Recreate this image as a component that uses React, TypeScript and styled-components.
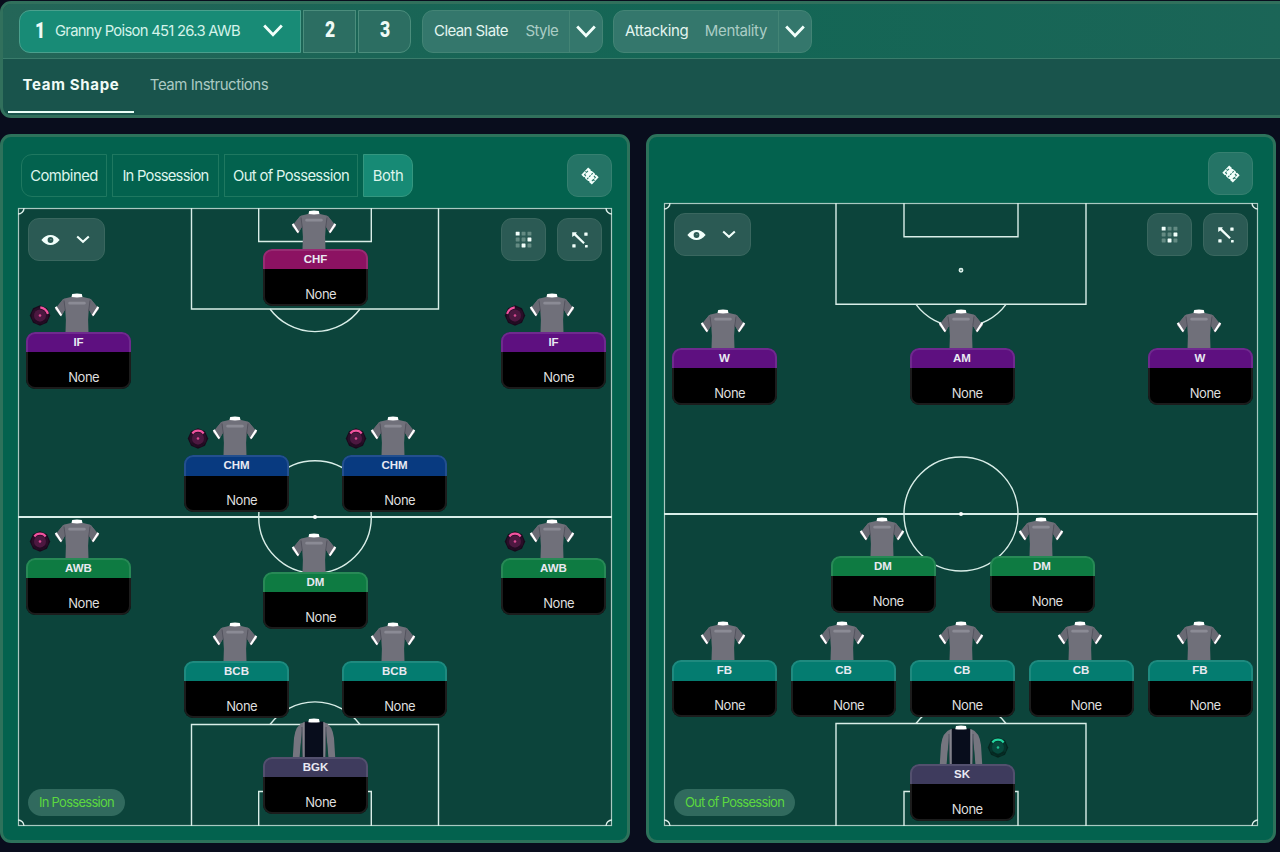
import React from "react";
import styled, { createGlobalStyle } from "styled-components";

const GlobalStyle = createGlobalStyle`
  *, *::before, *::after { box-sizing: border-box; }
  html, body { margin: 0; padding: 0; background: #090d1d; }
  body { font-family: Inter, "Liberation Sans", sans-serif; color: #e6f5f0; overflow: hidden; }
`;

const Screen = styled.div`
  width: 1280px;
  height: 852px;
  padding-top: 1px;
  display: flex;
  flex-direction: column;
  gap: 16px;
  overflow: hidden;
`;

const Header = styled.header`
  width: 1290px;
  height: 117px;
  flex: none;
  border: 3px solid #31705c;
  border-radius: 11px;
  overflow: hidden;
  background: #19544c;
`;

const TopBar = styled.div`
  display: flex;
  align-items: flex-start;
  height: 55px;
  padding: 6px 0 0 16px;
  border-bottom: 1px solid #3a7c6b;
  background: linear-gradient(90deg, #246658 0, #1a6556 380px, #136655 700px, #1b6557 1280px);
`;

const SlotGroup = styled.div`
  display: flex;
  gap: 2px;
  margin-right: 11px;
`;

const Slot = styled.button<{ $w: number; $active?: boolean; $end?: boolean }>`
  width: ${(p) => p.$w}px;
  height: 43px;
  display: flex;
  align-items: center;
  justify-content: ${(p) => (p.$active ? "flex-start" : "center")};
  padding: ${(p) => (p.$active ? "0 0 2px 10px" : "0 0 4px")};
  border: 1px solid ${(p) => (p.$active ? "#4aa08d" : "#4b8d7c")};
  border-radius: ${(p) => (p.$active ? "11px 0 0 11px" : p.$end ? "0 11px 11px 0" : "0")};
  background: ${(p) => (p.$active ? "#188b76" : "#2c6e62")};
  color: #effaf6;
`;

const SlotNumber = styled.span`
  width: 20px;
  margin-right: 0;
  text-align: center;
  font: 900 22px/24px Roboto, sans-serif;
  transform: scaleX(0.8);
`;

const SlotName = styled.span`
  width: 208px;
  margin-left: 5px;
  text-align: left;
  white-space: nowrap;
  font: 400 14.8px/20px Inter, sans-serif;
  letter-spacing: -0.71px;
  color: #d5f3ea;
`;

const SelectBox = styled.div<{ $w: number }>`
  width: ${(p) => p.$w}px;
  height: 43px;
  margin-right: 10px;
  display: flex;
  border: 1px solid #438475;
  border-radius: 11px;
  background: #34776c;
`;

const SelectText = styled.div`
  flex: 1;
  display: flex;
  align-items: center;
  justify-content: space-between;
  padding: 0 11px 1px 11px;
  border-right: 1px solid #438475;
  font: 400 15px/20px Inter, sans-serif;
  white-space: nowrap;
`;

const Value = styled.span<{ $ls: number }>`
  color: #e3f5f0;
  letter-spacing: ${(p) => p.$ls}px;
`;

const Kind = styled.span<{ $ls: number }>`
  color: #abcdc5;
  letter-spacing: ${(p) => p.$ls}px;
`;

const SelectArrow = styled.div`
  width: 32px;
  display: flex;
  align-items: center;
  justify-content: center;
`;

const Tabs = styled.nav`
  display: flex;
  height: 54px;
  padding-left: 5px;
`;

const Tab = styled.div<{ $active?: boolean; $w: number }>`
  width: ${(p) => p.$w}px;
  height: 54px;
  display: flex;
  justify-content: center;
  padding-top: 16px;
  border-bottom: 2px solid ${(p) => (p.$active ? "#eafff8" : "transparent")};
  color: ${(p) => (p.$active ? "#f0fbf7" : "#abcac3")};
  font: ${(p) => (p.$active ? 700 : 400)} 15px/20px Inter, sans-serif;
  letter-spacing: ${(p) => (p.$active ? "0.68px" : "-0.47px")};
  white-space: nowrap;
`;

const Panels = styled.main`
  display: flex;
  gap: 16px;
`;

const Panel = styled.section<{ $top: number }>`
  width: 630px;
  height: 709px;
  flex: none;
  border: 3px solid #2d725b;
  border-radius: 11px;
  background: #03624e;
  padding: ${(p) => p.$top}px 15px 0;
`;

const PanelBar = styled.div<{ $h: number; $right: number }>`
  display: flex;
  align-items: flex-start;
  justify-content: space-between;
  height: ${(p) => p.$h}px;
  padding: 0 ${(p) => p.$right}px 0 3px;
`;

const ViewGroup = styled.div`
  display: flex;
  gap: 5px;
`;

const ViewButton = styled.button<{ $w: number; $pos?: "start" | "end"; $active?: boolean; $ls: number }>`
  width: ${(p) => p.$w}px;
  height: 43px;
  padding: 0;
  border: 1px solid ${(p) => (p.$active ? "#34977f" : "#1f7860")};
  border-radius: ${(p) => (p.$pos === "start" ? "11px 0 0 11px" : p.$pos === "end" ? "0 11px 11px 0" : "0")};
  background: ${(p) => (p.$active ? "#178a75" : "transparent")};
  color: #ddf5ec;
  font: 400 14.8px/20px Inter, sans-serif;
  letter-spacing: ${(p) => p.$ls}px;
  white-space: nowrap;
`;

const IconButton = styled.button<{ $dark?: boolean; $w?: number }>`
  width: ${(p) => p.$w ?? 45}px;
  height: 43px;
  padding: 0 ${(p) => (p.$w ? 3 : 0)}px 0 0;
  display: flex;
  align-items: center;
  justify-content: center;
  gap: 16px;
  border: 1px solid ${(p) => (p.$dark ? "#3a675f" : "#368070")};
  border-radius: 11px;
  background: ${(p) => (p.$dark ? "#2b5a54" : "#257466")};
`;

const PitchArea = styled.div<{ $h: number }>`
  position: relative;
  width: 594px;
  height: ${(p) => p.$h}px;
  background: #0c443b;
`;

const Markings = styled.svg`
  display: block;
  overflow: visible;
`;

const PitchTools = styled.div`
  position: absolute;
  z-index: 2;
  top: 10px;
  left: 10px;
  right: 10px;
  display: flex;
  gap: 11px;
`;

const Spacer = styled.div`
  flex: 1;
`;

const Phase = styled.div<{ $w: number }>`
  position: absolute;
  left: 10px;
  bottom: 10px;
  width: ${(p) => p.$w}px;
  height: 27px;
  border-radius: 14px;
  background: #316a5e;
  color: #5cd83f;
  text-align: center;
  font: 400 13px/27px Inter, sans-serif;
  letter-spacing: -0.72px;
  white-space: nowrap;
`;

const PlayerSpot = styled.div.attrs<{ $x: number; $y: number }>((p) => ({
  style: { left: p.$x - 52.5, top: p.$y - 39 },
}))<{ $x: number; $y: number }>`
  position: absolute;
  width: 105px;
  display: flex;
  flex-direction: column;
  align-items: center;
`;

const ShirtSvg = styled.svg`
  display: block;
  margin-right: 3px;
`;

const DutySvg = styled.svg<{ $right?: boolean }>`
  position: absolute;
  top: 11px;
  left: ${(p) => (p.$right ? 77 : 3)}px;
`;

const Card = styled.div<{ $color: string }>`
  position: relative;
  width: 105px;
  height: 57px;
  border-radius: 9px;
  overflow: hidden;
  background: linear-gradient(${(p) => p.$color} 0 20.5px, #000 20.5px);
  &::after {
    content: "";
    position: absolute;
    inset: 0;
    border: 2px solid rgba(255, 255, 255, 0.11);
    border-radius: 9px;
  }
`;

const Role = styled.div`
  height: 21px;
  text-align: center;
  color: #e9e9f2;
  font: 700 11.5px/20px "Liberation Sans", sans-serif;
`;

const PlayerName = styled.div`
  margin-top: 14px;
  padding-left: 10.5px;
  text-align: center;
  color: #dedede;
  font: 400 13px/20px Inter, sans-serif;
  letter-spacing: -0.5px;
`;

function Chevron({ w, h, s }: { w: number; h: number; s: number }) {
  return (
    <svg width={w} height={h} viewBox={`0 0 ${w} ${h}`} fill="none" stroke="#f2fffb" strokeWidth={s}>
      <path d={`M1.2 1.5L${w / 2} ${h - 2.2}L${w - 1.2} 1.5`} />
    </svg>
  );
}

function TacticIcon() {
  return (
    <svg width="18" height="18" viewBox="0 0 18 18">
      <g transform="rotate(43 9 9)">
        <path d="M1.8 4h3.500l.8.8.8-.8h4.200l.8.8.8-.8h3.500v10h-3.500l-.8-.8-.8.8H6.900l-.8-.8-.8.8H1.800z" fill="#f2fffb" />
        <path d="M4 6.600v2.100H2.400M13.900 11.500V9.300h1.700M6.100 11.800H4.200v-1.500M11.800 6.300h2v1.400M9 5v2M9 8.200v2M9 11.300v1.900" fill="none" stroke="#257466" strokeWidth="1" />
      </g>
    </svg>
  );
}

function EyeIcon() {
  return (
    <svg width="19" height="12" viewBox="0 0 19 12">
      <path d="M.4 6C3.200 2.500 6 1.100 9.500 1.100S15.800 2.500 18.600 6C15.800 9.500 13 10.900 9.500 10.900S3.200 9.500.4 6z" fill="#f2fffb" />
      <circle cx="9.500" cy="6" r="2.900" fill="#2b5a54" />
      <circle cx="9.900" cy="5.600" r=".7" fill="#7f9f99" />
    </svg>
  );
}

function GridIcon() {
  const bright = [0, 5, 7];
  return (
    <svg width="17" height="17" viewBox="0 0 17 17">
      {Array.from({ length: 9 }, (_, i) => (
        <rect
          key={i}
          x={0.7 + (i % 3) * 5.9}
          y={0.7 + Math.floor(i / 3) * 5.9}
          width="3.900"
          height="3.900"
          rx=".4"
          fill={bright.includes(i) ? "#f2fffb" : "#648b83"}
        />
      ))}
    </svg>
  );
}

function PathIcon() {
  return (
    <svg width="18" height="18" viewBox="0 0 18 18" fill="#f2fffb">
      <path d="M1.200 1.300h4.600L5 2.700 13.800 11.600 12.300 13.100 3.300 4.400 1.200 6z" />
      <rect x="13.300" y="1.400" width="3.300" height="3.300" rx=".5" />
      <rect x="1.300" y="13.300" width="3.300" height="3.300" rx=".5" />
      <rect x="14" y="13.900" width="2.700" height="2.700" rx=".5" />
    </svg>
  );
}

function Shirt({ keeper }: { keeper?: boolean }) {
  if (keeper) {
    return (
      <ShirtSvg width="46" height="39" viewBox="0 0 46 39">
        <path d="M13 4Q4.500 7 3 20L1.800 39H8.600L10.500 19 12 39H34L35.500 19 37.400 39H44.200L43 20Q41.500 7 33 4z" fill="#75757f" />
        <path d="M10.500 12L9.200 39H12zM35.500 12L36.800 39H34z" fill="#0e443b" />
        <path d="M10.900 9L12 39M35.100 9L34 39" stroke="#565966" strokeWidth="1.200" />
        <path d="M13.800 3.600H32.200V39H13.800z" fill="#080d1c" />
        <path d="M12.700 5V39M33.300 5V39" stroke="#8b8a94" strokeWidth=".8" />
        <path d="M18 1Q23 0 28 1L28.700 4.200Q23 5 17.300 4.200z" fill="#fff" />
      </ShirtSvg>
    );
  }
  return (
    <ShirtSvg width="46" height="39" viewBox="0 -0.7 46 39">
      <path d="M17 3.200L10.500 4.900Q8.500 5.500 7 8L.9 15.200 7.100 23 11.200 15.500 11.900 26 11.500 39H34.500L34.100 26 34.800 15.500 38.900 23 45.100 15.200 39 8Q37.500 5.500 35.500 4.900L29 3.200z" fill="#70707a" />
      <path d="M10.500 4.900L11 16 7.100 22.500 1.500 15.200 7 8zM35.500 4.900L35 16 38.900 22.500 44.500 15.200 39 8z" fill="#696973" />
      <path d="M10 7L11.500 18M36 7L34.500 18" stroke="#51515c" strokeWidth=".9" />
      <path d="M1.700 13.200L7.300 21.800M44.300 13.200L38.700 21.800" stroke="#fff" strokeWidth="2.200" />
      <path d="M18.200 .2Q23 -.5 27.800 .2L28.500 3.400Q23 4.200 17.500 3.400z" fill="#fff" />
      <rect x="14.300" y="8" width="17.400" height="2.700" rx="1.200" fill="#8b8b95" />
    </ShirtSvg>
  );
}

type DutyKind = "up" | "left" | "right" | "green";

function Duty({ kind }: { kind: DutyKind }) {
  const green = kind === "green";
  const accent = green ? "#22d49e" : "#f254a0";
  const turn = kind === "left" ? -40 : kind === "right" ? 40 : 0;
  return (
    <DutySvg $right={green} width="22" height="22" viewBox="0 -0.5 22 22">
      <path d="M11 .8L18 3.700 21.200 11 18 18.300 11 21.200 4 18.300.8 11 4 3.700z" fill={green ? "#06251f" : "#180a1c"} />
      <circle cx="11" cy="11" r="8.600" fill={green ? "#06342c" : "#2a0e28"} />
      <circle cx="11" cy="11" r="6" fill={green ? "#07493d" : "#4c1840"} />
      <path d="M4.700 15.500L11 18.900 17.300 15.500" fill="none" stroke={green ? "#052821" : "#220b22"} strokeWidth="1.600" />
      <path
        d={turn ? "M6 4.600Q11 1.600 16 4.600" : "M5.300 5.900L7.200 4.100Q11 2.300 14.800 4.100L16.700 5.900"}
        transform={`rotate(${turn} 11 11)`}
        fill="none"
        stroke={accent}
        strokeWidth="2.200"
      />
      <circle cx="11" cy="11" r="1.300" fill={accent} opacity=".85" />
    </DutySvg>
  );
}

interface PlayerData {
  role: string;
  x: number;
  y: number;
  color: string;
  duty?: DutyKind;
  keeper?: boolean;
}

const colors = {
  striker: "#8c1262",
  attack: "#5e1080",
  mid: "#083a80",
  holding: "#0e7b42",
  defence: "#047c70",
  keeper: "#3e3b5d",
};

const inPossession: PlayerData[] = [
  { role: "CHF", x: 297.5, y: 41, color: colors.striker },
  { role: "IF", x: 60.5, y: 123.5, color: colors.attack, duty: "right" },
  { role: "IF", x: 535.5, y: 123.5, color: colors.attack, duty: "left" },
  { role: "CHM", x: 218.5, y: 247, color: colors.mid, duty: "up" },
  { role: "CHM", x: 376.5, y: 247, color: colors.mid, duty: "up" },
  { role: "AWB", x: 60.5, y: 350, color: colors.holding, duty: "up" },
  { role: "AWB", x: 535.5, y: 350, color: colors.holding, duty: "up" },
  { role: "DM", x: 297.5, y: 363.5, color: colors.holding },
  { role: "BCB", x: 218.5, y: 452.5, color: colors.defence },
  { role: "BCB", x: 376.5, y: 452.5, color: colors.defence },
  { role: "BGK", x: 297.5, y: 549, color: colors.keeper, keeper: true },
];

const outOfPossession: PlayerData[] = [
  { role: "W", x: 60.5, y: 145, color: colors.attack },
  { role: "AM", x: 298, y: 145, color: colors.attack },
  { role: "W", x: 536, y: 145, color: colors.attack },
  { role: "DM", x: 219, y: 352.5, color: colors.holding },
  { role: "DM", x: 378, y: 352.5, color: colors.holding },
  { role: "FB", x: 60.5, y: 456.5, color: colors.defence },
  { role: "CB", x: 179.5, y: 456.5, color: colors.defence },
  { role: "CB", x: 298, y: 456.5, color: colors.defence },
  { role: "CB", x: 417, y: 456.5, color: colors.defence },
  { role: "FB", x: 536, y: 456.5, color: colors.defence },
  { role: "SK", x: 298, y: 560.5, color: colors.keeper, keeper: true, duty: "green" },
];

interface PitchProps {
  height: number;
  mid: number;
  topBox: number;
  topSix: number;
  bottomBox: number;
  boxHalf: number;
  radius: number;
  phase: string;
  phaseWidth: number;
  players: PlayerData[];
}

function Pitch(p: PitchProps) {
  const h = p.height;
  const c = 297;
  const six = p.radius;
  return (
    <PitchArea $h={h}>
      <Markings width="594" height={h} viewBox={`0 0 594 ${h}`} fill="none" stroke="#d9eee8" strokeWidth="1.400">
        <rect x=".5" y=".5" width="593" height={h - 1} stroke="#a9c9c1" strokeWidth="1.200" />
        <path d={`M0 ${p.mid}H594`} strokeWidth="2" />
        <circle cx={c} cy={p.mid} r={p.radius} />
        <circle cx={c} cy={p.mid} r="2" fill="#fff" stroke="none" />
        <path d={`M${c - p.boxHalf} 0V${p.topBox}H${c + p.boxHalf}V0`} />
        <path d={`M${c - six} 0V${p.topSix}H${c + six}V0`} />
        <circle cx={c} cy={p.topBox - 34} r="1.600" strokeWidth="1.700" />
        <path d={`M${c - 45} ${p.topBox}A56 56 0 0 0 ${c + 45} ${p.topBox}`} />
        <path d={`M${c - p.boxHalf} ${h}V${p.bottomBox}H${c + p.boxHalf}V${h}`} />
        <path d={`M${c - six} ${h}V${h - 34.5}H${c + six}V${h}`} />
        <path d={`M${c - 45} ${p.bottomBox}A56 56 0 0 1 ${c + 45} ${p.bottomBox}`} />
        <path d={`M6 0A6 6 0 0 1 0 6M588 0A6 6 0 0 0 594 6M0 ${h - 6}A6 6 0 0 1 6 ${h}M594 ${h - 6}A6 6 0 0 0 588 ${h}`} />
      </Markings>
      {p.players.map((d, i) => (
        <PlayerSpot key={i} $x={d.x} $y={d.y}>
          <Shirt keeper={d.keeper} />
          {d.duty && <Duty kind={d.duty} />}
          <Card $color={d.color}>
            <Role>{d.role}</Role>
            <PlayerName>None</PlayerName>
          </Card>
        </PlayerSpot>
      ))}
      <PitchTools>
        <IconButton $dark $w={77}>
          <EyeIcon />
          <Chevron w={14} h={9} s={2.1} />
        </IconButton>
        <Spacer />
        <IconButton $dark>
          <GridIcon />
        </IconButton>
        <IconButton $dark>
          <PathIcon />
        </IconButton>
      </PitchTools>
      <Phase $w={p.phaseWidth}>{p.phase}</Phase>
    </PitchArea>
  );
}

export default function App() {
  return (
    <Screen>
      <GlobalStyle />
      <Header>
        <TopBar>
          <SlotGroup>
            <Slot $w={282} $active>
              <SlotNumber>1</SlotNumber>
              <SlotName>Granny Poison 451 26.3 AWB</SlotName>
              <Chevron w={20} h={13} s={2.8} />
            </Slot>
            <Slot $w={53}>
              <SlotNumber>2</SlotNumber>
            </Slot>
            <Slot $w={53} $end>
              <SlotNumber>3</SlotNumber>
            </Slot>
          </SlotGroup>
          <SelectBox $w={181}>
            <SelectText>
              <Value $ls={-0.57}>Clean Slate</Value>
              <Kind $ls={-0.65}>Style</Kind>
            </SelectText>
            <SelectArrow>
              <Chevron w={20} h={13} s={2.8} />
            </SelectArrow>
          </SelectBox>
          <SelectBox $w={199}>
            <SelectText>
              <Value $ls={-0.35}>Attacking</Value>
              <Kind $ls={-0.37}>Mentality</Kind>
            </SelectText>
            <SelectArrow>
              <Chevron w={20} h={13} s={2.8} />
            </SelectArrow>
          </SelectBox>
        </TopBar>
        <Tabs>
          <Tab $active $w={126}>
            Team Shape
          </Tab>
          <Tab $w={150}>Team Instructions</Tab>
        </Tabs>
      </Header>
      <Panels>
        <Panel $top={17}>
          <PanelBar $h={54} $right={0}>
            <ViewGroup>
              <ViewButton $w={86} $pos="start" $ls={-0.52}>
                Combined
              </ViewButton>
              <ViewButton $w={107} $ls={-0.77}>
                In Possession
              </ViewButton>
              <ViewButton $w={134} $ls={-0.64}>
                Out of Possession
              </ViewButton>
              <ViewButton $w={50} $pos="end" $active $ls={-0.4}>
                Both
              </ViewButton>
            </ViewGroup>
            <IconButton>
              <TacticIcon />
            </IconButton>
          </PanelBar>
          <Pitch
            height={618}
            mid={309}
            topBox={101}
            topSix={33.5}
            bottomBox={516.5}
            boxHalf={123.5}
            radius={56.3}
            phase="In Possession"
            phaseWidth={97}
            players={inPossession}
          />
        </Panel>
        <Panel $top={15}>
          <PanelBar $h={51} $right={5}>
            <ViewGroup />
            <IconButton>
              <TacticIcon />
            </IconButton>
          </PanelBar>
          <Pitch
            height={623}
            mid={311}
            topBox={101.3}
            topSix={33.7}
            bottomBox={520.5}
            boxHalf={125}
            radius={57}
            phase="Out of Possession"
            phaseWidth={121}
            players={outOfPossession}
          />
        </Panel>
      </Panels>
    </Screen>
  );
}
